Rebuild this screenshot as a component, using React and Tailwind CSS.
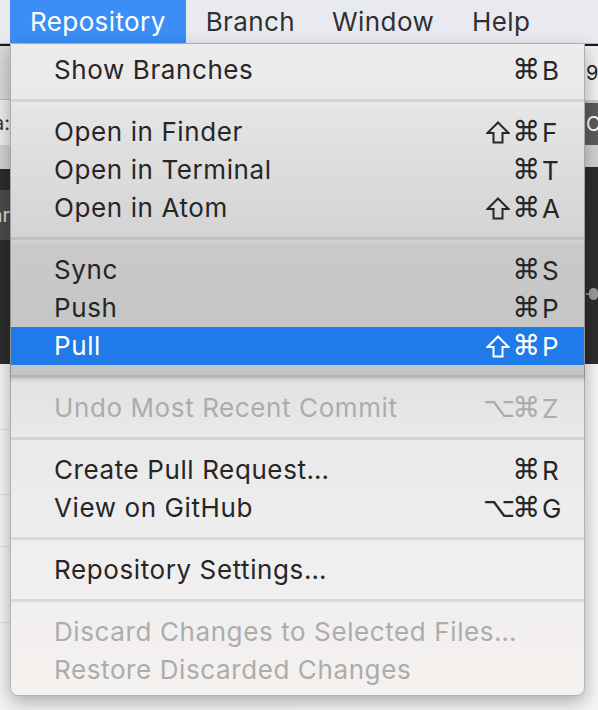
import React from "react";

const ShiftIcon = () => (
	<svg width="24" height="23" viewBox="0 0 24 23" className="inline-block">
		<path
			d="M12 1.5 L22.5 12 L16.5 12 L16.5 21.5 L7.5 21.5 L7.5 12 L1.5 12 Z"
			fill="none"
			stroke="currentColor"
			strokeWidth="2"
			strokeLinejoin="miter"
		/>
	</svg>
);

const sections = [
	[{ label: "Show Branches", mods: ["⌘"], key: "B" }],
	[
		{ label: "Open in Finder", mods: ["⇧", "⌘"], key: "F" },
		{ label: "Open in Terminal", mods: ["⌘"], key: "T" },
		{ label: "Open in Atom", mods: ["⇧", "⌘"], key: "A" },
	],
	[
		{ label: "Sync", mods: ["⌘"], key: "S" },
		{ label: "Push", mods: ["⌘"], key: "P" },
		{ label: "Pull", mods: ["⇧", "⌘"], key: "P", active: true },
	],
	[{ label: "Undo Most Recent Commit", mods: ["⌥", "⌘"], key: "Z", disabled: true }],
	[
		{ label: "Create Pull Request…", mods: ["⌘"], key: "R" },
		{ label: "View on GitHub", mods: ["⌥", "⌘"], key: "G" },
	],
	[{ label: "Repository Settings…" }],
	[
		{ label: "Discard Changes to Selected Files…", disabled: true },
		{ label: "Restore Discarded Changes", disabled: true },
	],
];

const MenuItem = ({ item }) => {
	let color = "text-[#262626]";
	if (item.disabled) color = "text-[#acacac]";
	if (item.active) color = "text-white";
	return (
		<div
			className={`flex items-center h-[38px] pl-[43px] pr-[21px] ${color} ${
				item.active ? "bg-[#1f7be9]" : ""
			}`}
		>
			<div className="flex-1 leading-[38px] whitespace-nowrap">{item.label}</div>
			{item.key && (
				<div className="flex items-center">
					{item.mods.map((m, i) =>
						m === "⇧" ? (
							<span key={i} className="w-[29px] flex justify-center">
								<ShiftIcon />
							</span>
						) : (
							<span
								key={i}
								className="w-[29px] text-center text-[28px] tracking-normal font-['DejaVu_Sans',sans-serif]"
							>
								{m}
							</span>
						)
					)}
					<span className="w-[22px] pl-[1px] text-left">{item.key}</span>
				</div>
			)}
		</div>
	);
};

const Band = ({ h, className = "", children }) => (
	<div className={`${h} ${className} flex`}>{children}</div>
);

const App = () => {
	return (
		<div className="relative w-[598px] h-[710px] overflow-hidden bg-[#f3f3f3] font-['Inter','DejaVu_Sans',sans-serif] text-[26px] tracking-[0.6px]">
			{/* menu bar */}
			<div className="flex h-[44px] pl-[10px] bg-[#e9eaf0] border-b border-[#b5b6ba] text-[#303030] tracking-[0.4px]">
				<div className="px-5 leading-[43px] bg-[#3b8ef5] text-white">Repository</div>
				<div className="pl-5 pr-[17px] leading-[43px]">Branch</div>
				<div className="pl-[20px] pr-[18px] leading-[43px]">Window</div>
				<div className="px-5 leading-[43px]">Help</div>
			</div>

			{/* window behind the menu */}
			<div className="flex text-[20px] tracking-normal">
				<div className="w-[300px] flex flex-col">
					<Band h="h-[2px]" className="bg-[#181818]" />
					<Band h="h-[53px]" className="bg-[#d9d9d9]" />
					<Band h="h-[1px]" className="bg-[#bdbdbd]" />
					<Band h="h-[45px]" className="bg-[#ececec] items-center">
						<div className="w-[10px] overflow-hidden flex justify-end text-[#333]">
							<span>a:</span>
						</div>
					</Band>
					<Band h="h-[24px]" className="bg-[#d2d2d2]" />
					<Band h="h-[21px]" className="bg-[#2c2c2c]" />
					<Band h="h-[50px]" className="bg-[#4b4b4b] items-center">
						<div className="w-[10px] overflow-hidden flex justify-end text-[#dcdcdc]">
							<span>ar</span>
						</div>
					</Band>
					<Band h="h-[124px]" className="bg-[#2d2d2d]" />
					<Band h="h-[66px]" className="bg-[#f4f4f4] border-b border-[#dcdcdc]" />
					<Band h="h-[65px]" className="bg-[#f4f4f4] border-b border-[#dcdcdc]" />
					<Band h="h-[52px]" className="bg-[#f4f4f4] border-b border-[#dcdcdc]" />
					<Band h="h-[76px]" className="bg-[#f4f4f4] border-b border-[#dcdcdc]" />
					<Band h="h-[80px]" className="bg-[#f4f4f4]" />
				</div>
				<div className="flex-1 flex flex-col">
					<Band h="h-[2px]" className="bg-[#181818]" />
					<Band h="h-[54px]" className="bg-[#f0f0f0] items-center justify-end">
						<div className="w-[12px] overflow-hidden text-[#222]">
							<span>9/</span>
						</div>
					</Band>
					<Band h="h-[3px]" className="bg-[#c8c8c8]" />
					<Band h="h-[42px]" className="bg-[#5b5b5b] items-center justify-end">
						<div className="w-[12px] overflow-hidden text-white">
							<span>Cl</span>
						</div>
					</Band>
					<Band h="h-[22px]" className="bg-[#d0d0d0]" />
					<Band h="h-[197px]" className="bg-[#2d2d2d] items-end justify-end pb-[64px]">
						<div className="w-[12px] flex items-center">
							<div className="w-[4px] h-[2px] bg-[#8a8a8a]" />
							<div className="w-[12px] h-[12px] rounded-full bg-[#9a9a9a]" />
						</div>
					</Band>
					<Band h="h-[346px]" className="bg-[#f5f5f5]" />
				</div>
			</div>

			{/* dropdown */}
			<div className="absolute left-[10px] top-[44px] w-[575px] pt-[7px] pb-[6px] rounded-b-[8px] border border-t-0 border-black/25 shadow-[0_6px_18px_rgba(0,0,0,0.3)] bg-[linear-gradient(to_bottom,#ececec_0%,#e9e9e9_9%,#e5e5e5_10%,#d3d3d3_30%,#c9c9c9_31%,#c4c4c4_51%,#e2e2e2_52%,#e9e9e9_60%,#efeeee_75%,#f4f1ef_100%)]">
				{sections.map((items, s) => (
					<div key={s}>
						{s > 0 && <div className="h-[3px] mt-[10px] mb-[11px] bg-black/[0.09]" />}
						{items.map((item) => (
							<MenuItem key={item.label} item={item} />
						))}
					</div>
				))}
			</div>
		</div>
	);
};

export default App;
